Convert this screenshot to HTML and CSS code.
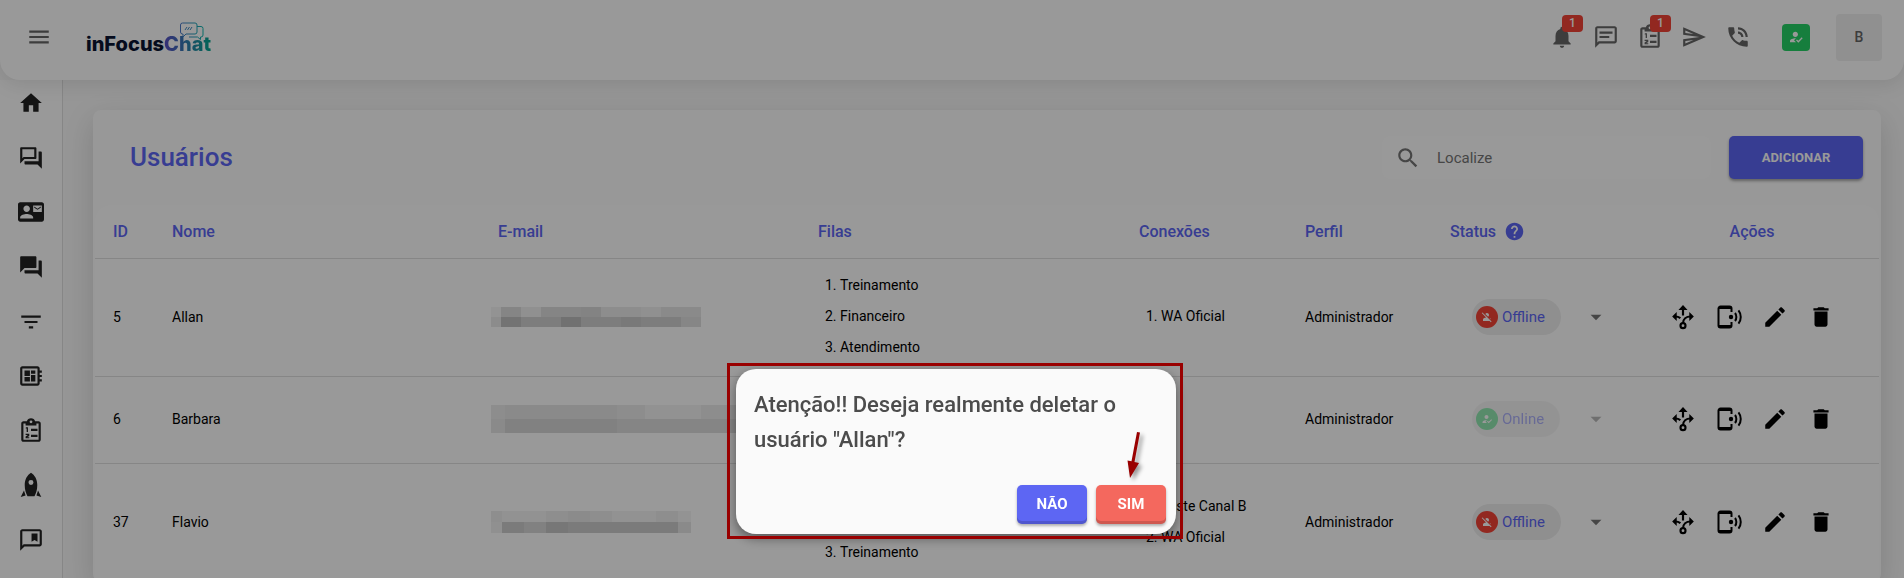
FILE: index.html
```
<!DOCTYPE html>
<html lang="pt-BR">

<head>
  <meta charset="utf-8">
  <meta name="viewport" content="width=device-width, initial-scale=1">
  <title>inFocusChat - Usuários</title>
  <link rel="stylesheet" href="styles.css">
</head>

<body>

  <!-- icon sprite -->
  <svg class="sprite" aria-hidden="true">
    <symbol id="i-menu" viewBox="0 0 24 24"><path d="M3 18h18v-2H3v2zm0-5h18v-2H3v2zm0-7v2h18V6H3z"/></symbol>
    <symbol id="i-home" viewBox="0 0 24 24"><path d="M10 20v-6h4v6h5v-8h3L12 3 2 12h3v8z"/></symbol>
    <symbol id="i-forum-outline" viewBox="0 0 24 24"><path d="M15 4v7H5.17L4 12.17V4h11m1-2H3c-.55 0-1 .45-1 1v14l4-4h10c.55 0 1-.45 1-1V3c0-.55-.45-1-1-1zm5 4h-2v9H6v2c0 .55.45 1 1 1h11l4 4V7c0-.55-.45-1-1-1z"/></symbol>
    <symbol id="i-contact" viewBox="0 0 24 24"><path d="M21 8V7l-3 2-3-2v1l3 2 3-2zm1-5H2C.9 3 0 3.9 0 5v14c0 1.1.9 2 2 2h20c1.1 0 1.99-.9 1.99-2L24 5c0-1.1-.9-2-2-2zM8 6c1.66 0 3 1.34 3 3s-1.34 3-3 3-3-1.34-3-3 1.34-3 3-3zm6 12H2v-1c0-2 4-3.1 6-3.1s6 1.1 6 3.1v1zm8-6h-8V6h8v6z"/></symbol>
    <symbol id="i-forum" viewBox="0 0 24 24"><path d="M21 6h-2v9H6v2c0 .55.45 1 1 1h11l4 4V7c0-.55-.45-1-1-1zm-4 6V3c0-.55-.45-1-1-1H3c-.55 0-1 .45-1 1v14l4-4h10c.55 0 1-.45 1-1z"/></symbol>
    <symbol id="i-filter" viewBox="0 0 24 24"><path d="M10 18h4v-2h-4v2zM3 6v2h18V6H3zm3 7h12v-2H6v2z"/></symbol>
    <symbol id="i-board" viewBox="0 0 24 24"><path d="M22 9V7h-2V5c0-1.1-.9-2-2-2H4c-1.1 0-2 .9-2 2v14c0 1.1.9 2 2 2h14c1.1 0 2-.9 2-2v-2h2v-2h-2v-2h2v-2h-2V9h2zm-4 10H4V5h14v14zM6 13h5v4H6zm6-6h4v3h-4zM6 7h5v5H6zm6 4h4v6h-4z"/></symbol>
    <symbol id="i-tasks" viewBox="0 0 24 24">
      <path fill-rule="evenodd" d="M19 3h-3.200C15.400 1.300 13.900.300 12 .300S8.600 1.300 8.200 3H5c-1.100 0-2 .9-2 2v15c0 1.100.9 2 2 2h14c1.100 0 2-.9 2-2V5c0-1.100-.9-2-2-2zm0 17H5V5h2v2h10V5h2v15zM12 2.200a1.300 1.300 0 1 1 0 2.600 1.300 1.300 0 0 1 0-2.600z"/>
      <path d="M12 10h6v2h-6zM12 15.500h6v2h-6zM7.300 8.500h1.900v4.500H8V9.700h-.9zM7 14.500h3.400v2.200L8.500 17.700h1.900v1.100H7v-1.800l2-1.400H7z"/>
    </symbol>
    <symbol id="i-rocket" viewBox="0 0 24 24"><path fill-rule="evenodd" d="M12 .7c-3.400 2.200-5.800 6-5.800 11.300 0 4.500 1.200 8 2.600 10.300h6.400c1.400-2.300 2.600-5.800 2.600-10.300 0-5.300-2.400-9.100-5.800-11.300zm0 6.600a2.300 2.300 0 1 1 0 4.600 2.300 2.300 0 0 1 0-4.600z"/><path d="M5.500 17L2.500 23 7 21.800zM18.500 17l3 6-4.500-1.200z"/></symbol>
    <symbol id="i-bookmark" viewBox="0 0 24 24"><path d="M20 2H4c-1.100 0-2 .9-2 2v18l4-4h14c1.100 0 2-.9 2-2V4c0-1.100-.9-2-2-2zm0 14H5.200L4 17.200V4h16v12z"/><path d="M12.500 6H18v7.500l-2.750-1.600-2.750 1.600z"/></symbol>
    <symbol id="i-bell" viewBox="0 0 24 24"><path d="M12 22c1.100 0 2-.9 2-2h-4c0 1.100.89 2 2 2zm6-6v-5c0-3.070-1.640-5.640-4.500-6.320V4c0-.83-.67-1.500-1.500-1.500s-1.500.67-1.500 1.500v.68C7.630 5.360 6 7.920 6 11v5l-2 2v1h16v-1l-2-2z"/></symbol>
    <symbol id="i-chat" viewBox="0 0 24 24"><path d="M4 4h16v12H5.170L4 17.170V4m0-2c-1.100 0-1.990.9-1.990 2L2 22l4-4h14c1.100 0 2-.9 2-2V4c0-1.100-.9-2-2-2H4zM6 7h12v2H6zM6 11h9v2H6z"/></symbol>
    <symbol id="i-send" viewBox="0 0 24 24"><path d="M4.010 6.030l7.510 3.220-7.520-1 .01-2.220m7.500 8.720L4 17.970v-2.220l7.510-1M2.010 3L2 10l15 2-15 2 .01 7L23 12 2.010 3z"/></symbol>
    <symbol id="i-call" viewBox="0 0 24 24"><path d="M20 15.500c-1.250 0-2.450-.2-3.570-.57-.35-.11-.74-.03-1.020.24l-2.200 2.200c-2.830-1.440-5.150-3.750-6.590-6.590l2.200-2.210c.28-.26.36-.65.25-1C8.700 6.450 8.500 5.250 8.500 4c0-.55-.45-1-1-1H4c-.55 0-1 .45-1 1 0 9.390 7.610 17 17 17 .55 0 1-.45 1-1v-3.500c0-.55-.45-1-1-1zM19 12h2c0-4.970-4.030-9-9-9v2c3.870 0 7 3.130 7 7zm-4 0h2c0-2.760-2.240-5-5-5v2c1.660 0 3 1.340 3 3z"/></symbol>
    <symbol id="i-user-on" viewBox="0 0 24 24"><path d="M9 17l3-2.940c-.39-.04-.68-.06-1-.06-2.670 0-8 1.340-8 4v2h9l-3-3zm2-5c2.210 0 4-1.790 4-4s-1.790-4-4-4-4 1.790-4 4 1.790 4 4 4M15.470 20.500L12 17l1.400-1.410 2.070 2.080 5.130-5.170 1.400 1.410z"/></symbol>
    <symbol id="i-user-off" viewBox="0 0 24 24"><path d="M8.650 5.820C9.360 4.720 10.600 4 12 4c2.210 0 4 1.790 4 4 0 1.400-.72 2.640-1.820 3.350L8.650 5.820zM20 17.170c-.02-1.100-.63-2.110-1.610-2.620-.54-.28-1.130-.54-1.770-.76L20 17.170zm1.190 4.020L2.810 2.810 1.390 4.220l8.890 8.890c-1.810.23-3.390.79-4.670 1.450C4.610 15.070 4 16.100 4 17.220V20h13.170l2.610 2.610 1.410-1.420z"/></symbol>
    <symbol id="i-help" viewBox="0 0 24 24"><path d="M12 2C6.480 2 2 6.480 2 12s4.480 10 10 10 10-4.480 10-10S17.520 2 12 2zm1 17h-2v-2h2v2zm2.070-7.750l-.9.920C13.450 12.900 13 13.500 13 15h-2v-.5c0-1.100.45-2.100 1.170-2.830l1.240-1.260c.37-.36.59-.86.59-1.410 0-1.100-.9-2-2-2s-2 .9-2 2H8c0-2.210 1.790-4 4-4s4 1.790 4 4c0 .88-.36 1.680-.93 2.250z"/></symbol>
    <symbol id="i-search" viewBox="0 0 24 24"><path d="M15.500 14h-.79l-.28-.27C15.410 12.590 16 11.110 16 9.500 16 5.910 13.090 3 9.500 3S3 5.910 3 9.500 5.910 16 9.500 16c1.610 0 3.090-.59 4.230-1.570l.27.28v.79l5 4.990L20.490 19l-4.990-5zm-6 0C7.010 14 5 11.990 5 9.500S7.010 5 9.500 5 14 7.010 14 9.500 11.990 14 9.500 14z"/></symbol>
    <symbol id="i-caret" viewBox="0 0 24 24"><path d="M7 10l5 5 5-5z"/></symbol>
    <symbol id="i-flow" viewBox="0 0 24 24">
      <path d="M12 1L7.800 5.500h8.400zM2 11.500L6.200 7.300v8.400zM22 11.500l-4.200-4.200v8.400z"/>
      <path d="M12 4v6.500M5 11.500c1.800 0 3.200.5 4.600 1.500M19 11.500c-4 0-7 2.500-7 6.500" fill="none" stroke="currentColor" stroke-width="2"/>
      <circle cx="12" cy="20" r="2.300" fill="none" stroke="currentColor" stroke-width="2"/>
    </symbol>
    <symbol id="i-phone-sound" viewBox="0 0 26 26">
      <path d="M15.500 8V4.500a2 2 0 0 0-2-2h-9a2 2 0 0 0-2 2v17a2 2 0 0 0 2 2h9a2 2 0 0 0 2-2V18" fill="none" stroke="currentColor" stroke-width="2"/>
      <path d="M3 2h12v3H3zM3 21h12v3H3z"/>
      <circle cx="15" cy="13" r="2.200"/>
      <path d="M19 9c1.800 2.200 1.800 5.800 0 8M22.500 6.300c3 3.800 3 9.600 0 13.400" fill="none" stroke="currentColor" stroke-width="2"/>
    </symbol>
    <symbol id="i-edit" viewBox="0 0 24 24"><path d="M3 17.250V21h3.750L17.810 9.940l-3.750-3.750L3 17.250zM20.710 7.040c.39-.39.39-1.020 0-1.410l-2.340-2.340c-.39-.39-1.020-.39-1.410 0l-1.830 1.830 3.750 3.750 1.830-1.830z"/></symbol>
    <symbol id="i-delete" viewBox="0 0 24 24"><path d="M6 19c0 1.100.9 2 2 2h8c1.100 0 2-.9 2-2V7H6v12zM19 4h-3.500l-1-1h-5l-1 1H5v2h14V4z"/></symbol>
  </svg>

  <header class="topbar">
    <button class="icon-btn" type="button" aria-label="Abrir menu"><svg class="icon"><use href="#i-menu"/></svg></button>
    <a class="logo" href="#">
      <span class="logo-in">inFocus</span><span class="logo-chat">Chat</span>
      <svg class="logo-bubble" viewBox="0 0 26 18" aria-hidden="true">
        <defs>
          <linearGradient id="bubble" x1="0" x2="1"><stop offset="0" stop-color="#4c78c8"/><stop offset="1" stop-color="#10b8b0"/></linearGradient>
        </defs>
        <path d="M3.500 1h12.500a2 2 0 0 1 2 2v7a2 2 0 0 1-2 2H7l-3 3v-3H3.500a2 2 0 0 1-2-2V3a2 2 0 0 1 2-2zM18 4.500h4a2 2 0 0 1 2 2V13a2 2 0 0 1-2 2h-.5v2.500l-3-2.500H10" fill="none" stroke="url(#bubble)"/>
        <path d="M6 8l2-3M8.500 8l2-3M11 8l2-3" stroke="#3f8ac0"/>
      </svg>
    </a>
    <div class="topbar-actions">
      <button class="icon-btn" type="button" aria-label="Notificações"><svg class="icon"><use href="#i-bell"/></svg><span class="badge">1</span></button>
      <button class="icon-btn" type="button" aria-label="Chat interno"><svg class="icon"><use href="#i-chat"/></svg></button>
      <button class="icon-btn" type="button" aria-label="Tarefas"><svg class="icon"><use href="#i-tasks"/></svg><span class="badge">1</span></button>
      <button class="icon-btn" type="button" aria-label="Enviar"><svg class="icon"><use href="#i-send"/></svg></button>
      <button class="icon-btn" type="button" aria-label="Chamadas"><svg class="icon"><use href="#i-call"/></svg></button>
      <button class="presence" type="button" aria-label="Disponível"><svg class="icon"><use href="#i-user-on"/></svg></button>
      <button class="avatar" type="button">B</button>
    </div>
  </header>

  <div class="layout">
    <nav class="sidebar">
      <a href="#" aria-label="Início"><svg class="icon"><use href="#i-home"/></svg></a>
      <a href="#" aria-label="Atendimentos"><svg class="icon"><use href="#i-forum-outline"/></svg></a>
      <a href="#" aria-label="Contatos"><svg class="icon"><use href="#i-contact"/></svg></a>
      <a href="#" aria-label="Chat interno"><svg class="icon"><use href="#i-forum"/></svg></a>
      <a href="#" aria-label="Funil"><svg class="icon"><use href="#i-filter"/></svg></a>
      <a href="#" aria-label="Painel"><svg class="icon"><use href="#i-board"/></svg></a>
      <a href="#" aria-label="Tarefas"><svg class="icon"><use href="#i-tasks"/></svg></a>
      <a href="#" aria-label="Campanhas"><svg class="icon"><use href="#i-rocket"/></svg></a>
      <a href="#" aria-label="Respostas rápidas"><svg class="icon"><use href="#i-bookmark"/></svg></a>
    </nav>

    <main class="content">
      <section class="card">
        <div class="toolbar">
          <h1>Usuários</h1>
          <label class="search">
            <svg class="icon"><use href="#i-search"/></svg>
            <input type="search" placeholder="Localize" aria-label="Localize">
          </label>
          <button class="btn btn-add" type="button">ADICIONAR</button>
        </div>

        <table class="users">
          <colgroup>
            <col class="col-id">
            <col class="col-name">
            <col class="col-email">
            <col class="col-queues">
            <col class="col-connections">
            <col class="col-profile">
            <col class="col-status">
            <col class="col-actions">
          </colgroup>
          <thead>
            <tr>
              <th>ID</th>
              <th>Nome</th>
              <th>E-mail</th>
              <th>Filas</th>
              <th>Conexões</th>
              <th>Perfil</th>
              <th><span class="th-status">Status <svg class="icon"><use href="#i-help"/></svg></span></th>
              <th class="center">Ações</th>
            </tr>
          </thead>
          <tbody>
            <tr>
              <td>5</td>
              <td>Allan</td>
              <td>
                <svg class="masked" width="210" height="20" shape-rendering="crispEdges">
                  <path fill="#f5f5f5" d="M0 0h10v10H0z"/><path fill="#dedede" d="M10 0h20v10H10zM50 0h40v10H50z"/><path fill="#f0f0f0" d="M30 0h20v10H30zM150 0h20v10h-20z"/>
                  <path fill="#dadada" d="M90 0h20v10H90z"/><path fill="#ebebeb" d="M110 0h40v10h-40z"/><path fill="#e6e6e6" d="M170 0h40v10h-40z"/>
                  <path fill="#e9e9e9" d="M0 10h10v10H0z"/><path fill="#c0c0c0" d="M10 10h20v10H10z"/><path fill="#d0d0d0" d="M30 10h160v10H30z"/>
                  <path fill="#bcbcbc" d="M70 10h20v10H70z"/><path fill="#cacaca" d="M130 10h20v10h-20z"/><path fill="#dfdfdf" d="M190 10h20v10h-20z"/>
                </svg>
              </td>
              <td><ol><li>Treinamento</li><li>Financeiro</li><li>Atendimento</li></ol></td>
              <td><ol><li>WA Oficial</li></ol></td>
              <td>Administrador</td>
              <td>
                <div class="status">
                  <label class="chip offline"><span class="chip-icon"><svg class="icon"><use href="#i-user-off"/></svg></span>
                    <select aria-label="Status de Allan"><option>Offline</option><option>Online</option></select></label>
                  <svg class="icon"><use href="#i-caret"/></svg>
                </div>
              </td>
              <td>
                <div class="actions">
                  <button type="button" aria-label="Fluxo"><svg class="icon"><use href="#i-flow"/></svg></button>
                  <button type="button" aria-label="Ramal"><svg class="icon"><use href="#i-phone-sound"/></svg></button>
                  <button type="button" aria-label="Editar"><svg class="icon"><use href="#i-edit"/></svg></button>
                  <button type="button" aria-label="Deletar"><svg class="icon"><use href="#i-delete"/></svg></button>
                </div>
              </td>
            </tr>
            <tr>
              <td>6</td>
              <td>Barbara</td>
              <td>
                <svg class="masked" width="280" height="28" shape-rendering="crispEdges">
                  <path fill="#ebebeb" d="M0 0h280v14H0z"/><path fill="#e6e6e6" d="M14 0h112v14H14z"/><path fill="#f3f3f3" d="M154 0h56v14h-56z"/>
                  <path fill="#e6e6e6" d="M0 14h14v14H0z"/><path fill="#d8d8d8" d="M14 14h112v14H14z"/><path fill="#dedede" d="M126 14h154v14H126z"/>
                </svg>
              </td>
              <td></td>
              <td></td>
              <td>Administrador</td>
              <td>
                <div class="status disabled">
                  <label class="chip online"><span class="chip-icon"><svg class="icon"><use href="#i-user-on"/></svg></span>
                    <select aria-label="Status de Barbara" disabled><option>Online</option></select></label>
                  <svg class="icon"><use href="#i-caret"/></svg>
                </div>
              </td>
              <td>
                <div class="actions">
                  <button type="button" aria-label="Fluxo"><svg class="icon"><use href="#i-flow"/></svg></button>
                  <button type="button" aria-label="Ramal"><svg class="icon"><use href="#i-phone-sound"/></svg></button>
                  <button type="button" aria-label="Editar"><svg class="icon"><use href="#i-edit"/></svg></button>
                  <button type="button" aria-label="Deletar"><svg class="icon"><use href="#i-delete"/></svg></button>
                </div>
              </td>
            </tr>
            <tr>
              <td>37</td>
              <td>Flavio</td>
              <td>
                <svg class="masked" width="200" height="22" shape-rendering="crispEdges">
                  <path fill="#ededed" d="M0 0h200v11H0z"/><path fill="#f3f3f3" d="M11 0h22v11H11zM33 0h22v11H33zM121 0h44v11h-44z"/><path fill="#e8e8e8" d="M77 0h22v11H77z"/><path fill="#f5f5f5" d="M187 0h13v11h-13z"/>
                  <path fill="#f0f0f0" d="M0 11h11v11H0z"/><path fill="#cdcdcd" d="M11 11h176v11H11z"/><path fill="#d8d8d8" d="M33 11h22v11H33z"/><path fill="#c6c6c6" d="M55 11h22v11H55z"/><path fill="#e6e6e6" d="M187 11h13v11h-13z"/>
                </svg>
              </td>
              <td><ol><li>Atendimento</li><li>Financeiro</li><li>Treinamento</li></ol></td>
              <td><ol><li>Teste Canal B</li><li>WA Oficial</li></ol></td>
              <td>Administrador</td>
              <td>
                <div class="status">
                  <label class="chip offline"><span class="chip-icon"><svg class="icon"><use href="#i-user-off"/></svg></span>
                    <select aria-label="Status de Flavio"><option>Offline</option><option>Online</option></select></label>
                  <svg class="icon"><use href="#i-caret"/></svg>
                </div>
              </td>
              <td>
                <div class="actions">
                  <button type="button" aria-label="Fluxo"><svg class="icon"><use href="#i-flow"/></svg></button>
                  <button type="button" aria-label="Ramal"><svg class="icon"><use href="#i-phone-sound"/></svg></button>
                  <button type="button" aria-label="Editar"><svg class="icon"><use href="#i-edit"/></svg></button>
                  <button type="button" aria-label="Deletar"><svg class="icon"><use href="#i-delete"/></svg></button>
                </div>
              </td>
            </tr>
          </tbody>
        </table>
      </section>
    </main>
  </div>

  <div class="backdrop">
    <div class="dialog" role="dialog" aria-modal="true" aria-labelledby="dialog-title">
      <h2 id="dialog-title">Atenção!! Deseja realmente deletar o usuário "Allan"?</h2>
      <div class="dialog-actions">
        <button class="btn btn-no" type="button">NÃO</button>
        <button class="btn btn-yes" type="button">SIM</button>
      </div>
      <svg class="pointer" viewBox="0 0 20 50" aria-hidden="true">
        <path d="M11 1l3 .5L8.500 31l4.500 1L4 47 1.500 29.500l4 .8z"/>
      </svg>
    </div>
  </div>

</body>

</html>
```

FILE: styles.css
```
:root {
  --primary: #5d66f3;
  --danger: #f44336;
  --success: #25d366;
  --line: #e0e0e0;
  --radius: 8px;
  --topbar-height: 80px;
}

* {
  box-sizing: border-box;
}

body {
  margin: 0;
  height: 100vh;
  overflow: hidden;
  background: #fafafa;
  color: #000;
  font-family: Roboto, "Liberation Sans", sans-serif;
  font-size: 14px;
}

button,
input,
select {
  font: inherit;
  color: inherit;
}

button {
  padding: 0;
  border: none;
  background: none;
  cursor: pointer;
}

.sprite {
  display: none;
}

.icon {
  display: block;
  flex: none;
  width: 26px;
  height: 26px;
  fill: currentColor;
}

/*********** Top bar ***********/

.topbar {
  position: relative;
  z-index: 1;
  display: flex;
  align-items: center;
  height: var(--topbar-height);
  padding: 0 22px 6px 26px;
  background: #fff;
  border-radius: 0 0 20px 20px;
  box-shadow: 0 4px 20px rgba(0, 0, 0, 0.1);
  color: #666;
}

.icon-btn {
  position: relative;
}

.logo {
  position: relative;
  margin: 14px 0 0 34px;
  font-family: Inter, sans-serif;
  font-size: 20px;
  font-weight: 800;
  line-height: 24px;
  text-decoration: none;
}

.logo-in {
  color: #0a1533;
}

.logo-chat {
  background: linear-gradient(90deg, #5b4fc8, #2f7fb0 50%, #04a890);
  -webkit-background-clip: text;
  background-clip: text;
  color: transparent;
}

.logo-bubble {
  position: absolute;
  top: -10px;
  right: 6px;
  width: 26px;
  height: 18px;
}

.topbar-actions {
  display: flex;
  align-items: center;
  gap: 18px;
  margin-left: auto;
}

.badge {
  position: absolute;
  top: -9px;
  left: 13px;
  width: 21px;
  border-radius: 4px;
  background: var(--danger);
  color: #fff;
  font-size: 12px;
  font-weight: 500;
  line-height: 17px;
  text-align: center;
}

.presence {
  display: grid;
  place-items: center;
  width: 28px;
  height: 27px;
  margin-left: 13px;
  border-radius: 4px;
  background: var(--success);
  color: #fff;
}

.presence .icon {
  width: 16px;
  height: 16px;
}

.avatar {
  width: 46px;
  height: 47px;
  margin-left: 8px;
  border-radius: 4px;
  background: #f0f0f0;
  color: #666;
  font-weight: 500;
}

/*********** Sidebar ***********/

.layout {
  display: flex;
  height: calc(100vh - var(--topbar-height));
}

.sidebar {
  display: flex;
  flex: none;
  flex-direction: column;
  align-items: center;
  justify-content: space-between;
  width: 63px;
  padding: 10px 0 25px;
  border-right: 1px solid var(--line);
  background: #fff;
}

.sidebar a {
  color: #222;
}

/*********** Users ***********/

.content {
  flex: 1;
  min-width: 0;
  overflow: hidden;
  padding: 30px 23px 0 30px;
}

.card {
  padding: 0 2px;
  border-radius: var(--radius);
  background: #fdfdfd;
  box-shadow: 0 10px 30px rgba(0, 0, 0, 0.15);
}

.toolbar {
  display: flex;
  align-items: center;
  gap: 18px;
  padding: 26px 16px 26px 35px;
}

.toolbar h1 {
  margin: 0 auto 0 0;
  padding-bottom: 2px;
  color: var(--primary);
  font-size: 26px;
  font-weight: 500;
  line-height: 40px;
}

.search {
  display: flex;
  align-items: center;
  gap: 16px;
  width: 329px;
  height: 43px;
  padding: 0 13px;
  border-radius: var(--radius);
  background: #fff;
  color: #757575;
}

.search input {
  min-width: 0;
  flex: 1;
  padding: 0;
  border: none;
  outline: none;
  background: none;
  font-size: 15px;
}

.search input::placeholder {
  color: #757575;
}

.btn {
  border-radius: 5px;
  color: #fff;
  font-weight: 700;
}

.btn-add {
  width: 134px;
  height: 43px;
  background: var(--primary);
  box-shadow: 0 2px 3px rgba(0, 0, 0, 0.35);
  font-size: 13px;
}

.users {
  width: 100%;
  table-layout: fixed;
  border-spacing: 0;
  border-radius: 16px 16px 0 0;
  background: #fff;
}

.col-id { width: 59px; }
.col-name { width: 326px; }
.col-email { width: 320px; }
.col-queues { width: 321px; }
.col-connections { width: 166px; }
.col-profile { width: 145px; }
.col-status { width: 193px; }
.col-actions { width: 254px; }

.users th,
.users td {
  padding: 11px 18px 13px;
  border-bottom: 1px solid var(--line);
  text-align: left;
}

.users th {
  height: 54px;
  padding: 12px 18px;
  color: var(--primary);
  font-size: 16px;
  font-weight: 500;
}

.users td {
  height: 87px;
}

.users .center {
  text-align: center;
}

.th-status {
  display: flex;
  align-items: center;
  gap: 8px;
}

.th-status .icon {
  width: 21px;
  height: 21px;
}

.users ol {
  margin: 0;
  padding-left: 7px;
  line-height: 31px;
  list-style-position: inside;
}

/* pixelated e-mail */
.masked {
  display: block;
  margin-left: -7px;
}

.status {
  display: flex;
  align-items: center;
  justify-content: space-between;
  margin-right: -2px;
  padding-left: 22px;
  color: #757575;
}

.status.disabled {
  opacity: 0.5;
}

.chip {
  display: flex;
  align-items: center;
  gap: 4px;
  height: 36px;
  padding: 0 16px 0 4px;
  border-radius: 18px;
  background: #efefef;
  color: var(--primary);
}

.chip select {
  padding: 0;
  border: none;
  outline: none;
  background: none;
  appearance: none;
  field-sizing: content;
  font-size: 15px;
  opacity: 1;
}

.chip-icon {
  display: grid;
  place-items: center;
  width: 22px;
  height: 22px;
  border-radius: 50%;
  color: #fff;
}

.chip-icon .icon {
  width: 12px;
  height: 12px;
}

.offline .chip-icon {
  background: var(--danger);
}

.online .chip-icon {
  background: var(--success);
}

.actions {
  display: flex;
  justify-content: center;
  gap: 20px;
}

/*********** Confirmation dialog ***********/

.backdrop {
  position: fixed;
  inset: 0;
  z-index: 10;
  display: flex;
  justify-content: center;
  align-items: flex-end;
  padding: 0 0 44px 8px;
  background: rgba(0, 0, 0, 0.4);
}

.dialog {
  position: relative;
  width: 440px;
  padding: 18px 10px 10px;
  border-radius: 20px;
  background: #fafafa;
  box-shadow: 0 4px 12px rgba(0, 0, 0, 0.45);
}

/* highlight frame */
.dialog::after {
  content: "";
  position: absolute;
  inset: -6px -7px -5px -9px;
  border: 3px solid #990000;
  pointer-events: none;
}

.dialog h2 {
  margin: 0 0 28px;
  padding: 0 8px;
  color: #4c4c4c;
  font-size: 22px;
  font-weight: 500;
  line-height: 35px;
}

.dialog-actions {
  display: flex;
  justify-content: flex-end;
  gap: 9px;
}

.dialog .btn {
  width: 70px;
  height: 39px;
  padding-bottom: 2px;
  font-size: 15px;
  box-shadow: inset 0 -3px 0 rgba(0, 0, 0, 0.15), 0 2px 3px rgba(0, 0, 0, 0.3);
}

.btn-no {
  background: var(--primary);
}

.btn-yes {
  background: #f4685e;
}

.pointer {
  position: absolute;
  right: 30px;
  bottom: 53px;
  width: 20px;
  height: 50px;
  fill: #990000;
  filter: drop-shadow(3px 3px 2px rgba(0, 0, 0, 0.4));
}
```
